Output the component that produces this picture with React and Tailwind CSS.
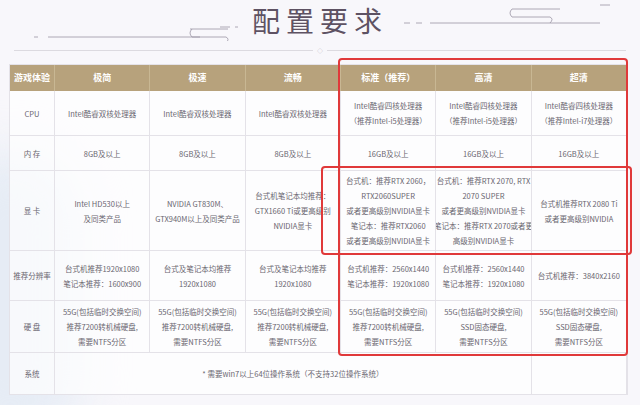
const cols = ['游戏体验', '极简', '极速', '流畅', '标准（推荐）', '高清', '超清'];

const rows = [
  { label: 'CPU', h: 'h-[45px]', cells: [
    ['Intel酷睿双核处理器'], ['Intel酷睿双核处理器'], ['Intel酷睿双核处理器'],
    ['Intel酷睿四核处理器', '（推荐Intel-i5处理器）'], ['Intel酷睿四核处理器', '（推荐Intel-i5处理器）'], ['Intel酷睿四核处理器', '（推荐Intel-i7处理器）'],
  ] },
  { label: '内 存', h: 'h-[35px]', cells: [['8GB及以上'], ['8GB及以上'], ['8GB及以上'], ['16GB及以上'], ['16GB及以上'], ['16GB及以上']] },
  { label: '显 卡', h: 'h-[80px]', cells: [
    ['Intel HD530以上', '及同类产品'], ['NVIDIA GT830M、', 'GTX940M以上及同类产品'], ['台式机笔记本均推荐：', 'GTX1660 Ti或更高级别', 'NVIDIA显卡'],
    ['台式机：推荐RTX 2060，', 'RTX2060SUPER', '或者更高级别NVIDIA显卡', '笔记本：推荐RTX2060', '或者更高级别NVIDIA显卡'],
    ['台式机：推荐RTX 2070, RTX', '2070 SUPER', '或者更高级别NVIDIA显卡', '笔记本：推荐RTX 2070或者更', '高级别NVIDIA显卡'],
    ['台式机推荐RTX 2080 Ti', '或者更高级别NVIDIA'],
  ] },
  { label: '推荐分辨率', h: 'h-[50px]', cells: [
    ['台式机推荐1920x1080', '笔记本推荐：1600x900'], ['台式及笔记本均推荐', '1920x1080'], ['台式及笔记本均推荐', '1920x1080'],
    ['台式机推荐：2560x1440', '笔记本推荐：1920x1080'], ['台式机推荐：2560x1440', '笔记本推荐：1920x1080'], ['台式机推荐：3840x2160'],
  ] },
  { label: '硬 盘', h: 'h-[52px]', cells: [
    ['55G(包括临时交换空间)', '推荐7200转机械硬盘,', '需要NTFS分区'], ['55G(包括临时交换空间)', '推荐7200转机械硬盘,', '需要NTFS分区'], ['55G(包括临时交换空间)', '推荐7200转机械硬盘,', '需要NTFS分区'],
    ['55G(包括临时交换空间)', '推荐7200转机械硬盘,', '需要NTFS分区'], ['55G(包括临时交换空间)', 'SSD固态硬盘,', '需要NTFS分区'], ['55G(包括临时交换空间)', 'SSD固态硬盘,', '需要NTFS分区'],
  ] },
];

const grid = 'grid grid-cols-[45px_repeat(6,1fr)]';

function Cell({ lines, className = '' }) {
  return (
    <div className={`flex flex-col items-center justify-center overflow-hidden border-r border-[#e4e2e8] text-center leading-[15px] whitespace-nowrap ${className}`}>
      {lines.map((l, i) => <span key={i}>{l}</span>)}
    </div>
  );
}

export default function App() {
  return (
    <div className="relative w-[640px] h-[405px] overflow-hidden bg-[#f8f7fb] text-[7.5px] text-[#6a6670]" style={{ fontFamily: '"Noto Sans CJK SC", "Noto Sans", sans-serif' }}>
      <div className="absolute left-[-60px] top-[150px] w-[140px] h-[300px] rounded-full bg-[#e6ecf5] blur-xl" />
      <div className="relative flex items-center justify-center gap-3 h-[40px]">
        <svg width="210" height="34" viewBox="0 0 210 34" className="mt-2">
          <path d="M18 30 H170 M190 20 H200 M205 20 H208" stroke="#9a96a4" strokeWidth="0.8" fill="none" />
          <path d="M160 22 H198 M162 22 Q158 26 162 30 H196 Q200 32 196 36" stroke="#9a96a4" strokeWidth="0.8" fill="none" />
          <path d="M4 30 H8" stroke="#9a96a4" strokeWidth="0.8" />
        </svg>
        <span className="text-[28px] leading-[36px] tracking-[6px] text-[#5e5263]" style={{ fontFamily: '"Noto Sans CJK SC", serif' }}>配置要求</span>
        <svg width="210" height="34" viewBox="0 0 210 34" className="mb-2">
          <path d="M4 24 H10 M16 24 H22 M30 24 H200" stroke="#9a96a4" strokeWidth="0.8" fill="none" />
          <path d="M200 6 H240 M112 10 H160 M112 10 Q108 14 112 18 H150 Q154 20 150 24" stroke="#9a96a4" strokeWidth="0.8" fill="none" />
        </svg>
      </div>
      <div className="relative mx-[14px] mt-[6px] h-[9px] flex items-center">
        <div className="flex-1 h-px bg-[#dcdae0]" />
        <span className="text-[6px] leading-[9px] text-[#b9b5c0] px-1">◇</span>
        <div className="flex-1 h-px bg-[#dcdae0]" />
      </div>
      <div className="relative mx-[9px] mt-[9px] w-[619px] bg-white/70 border border-[#e4e2e8]">
        <div className={`${grid} h-[26px] bg-[#b7a27c] text-white text-[9px] font-bold`}>
          {cols.map((c) => <div key={c} className="flex items-center justify-center border-r border-[#c8b793]">{c}</div>)}
        </div>
        {rows.map((r) => (
          <div key={r.label} className={`${grid} ${r.h} border-b border-[#e4e2e8]`}>
            <Cell lines={[r.label]} />
            {r.cells.map((c, i) => <Cell key={i} lines={c} />)}
          </div>
        ))}
        <div className={`${grid} h-[41px]`}>
          <Cell lines={['系统']} />
          <Cell lines={['* 需要win7以上64位操作系统（不支持32位操作系统）']} className="col-span-5" />
          <Cell lines={['']} />
        </div>
      </div>
      <div className="absolute left-[338px] top-[58px] w-[290px] h-[298px] border-2 border-[#e0393a] rounded-sm" />
      <div className="absolute left-[321px] top-[166px] w-[311px] h-[89px] border-2 border-[#e0393a] rounded-sm" />
    </div>
  );
}
